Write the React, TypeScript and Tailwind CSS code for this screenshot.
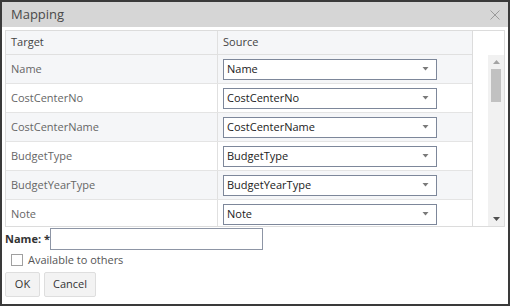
import React from "react";

const rows = [
  "Name",
  "CostCenterNo",
  "CostCenterName",
  "BudgetType",
  "BudgetYearType",
  "Note",
];

function Caret() {
  return (
    <svg width="7" height="4" viewBox="0 0 7 4" className="shrink-0">
      <path d="M0.5 0 L6.5 0 L3.5 3.5 Z" fill="#7a7a7a" />
    </svg>
  );
}

export default function App() {
  return (
    <div
      className="w-[510px] h-[306px] border-2 border-[#3a3a3a] bg-white flex flex-col text-[11px] text-[#333]"
      style={{ fontFamily: "'Open Sans', 'Noto Sans', sans-serif" }}
    >
      <div className="h-[25px] bg-[#d6d6d6] flex items-center justify-between pl-[9px] pr-[8px] shrink-0">
        <span className="text-[13px] text-[#4a4a4a]">Mapping</span>
        <svg width="10" height="10" viewBox="0 0 10 10">
          <path d="M0.5 0.5 L9.5 9.5 M9.5 0.5 L0.5 9.5" stroke="#9a9a9a" strokeWidth="1" />
        </svg>
      </div>
      <div className="px-[3px] pt-[3px] flex flex-col flex-1">
        <div className="h-[197px] border border-[#dcdcdc] flex shrink-0">
          <div className="w-[467px] flex flex-col overflow-hidden border-r border-[#dcdcdc]">
            <div className="h-[24px] shrink-0 flex bg-[#f5f6f8] border-b border-[#e0e0e0] text-[#444]">
              <div className="w-[212px] border-r border-[#e0e0e0] flex items-center pl-[5px]">Target</div>
              <div className="flex-1 flex items-center pl-[5px]">Source</div>
            </div>
            {rows.map((r, i) => (
              <div
                key={r}
                className={`h-[29px] shrink-0 flex border-b border-[#e4e4e4] ${i % 2 === 0 ? "bg-[#f5f6f8]" : "bg-white"}`}
              >
                <div className="w-[212px] border-r border-[#e0e0e0] flex items-center pl-[5px] text-[#666]">{r}</div>
                <div className="flex-1 flex items-center pl-[5px]">
                  <div className="w-[214px] h-[21px] border border-[#7d879a] bg-white flex items-center justify-between pl-[3px] pr-[7px] text-[#222]">
                    <span>{r}</span>
                    <Caret />
                  </div>
                </div>
              </div>
            ))}
          </div>
          <div className="flex-1 flex flex-col">
            <div className="h-[24px] shrink-0" />
            <div className="flex-1 flex justify-end">
              <div className="w-[16px] bg-[#f1f1f1] flex flex-col items-center">
                <div className="h-[14px] flex items-center justify-center">
                  <svg width="7" height="4" viewBox="0 0 7 4">
                    <path d="M0 4 L7 4 L3.5 0 Z" fill="#a3a3a3" />
                  </svg>
                </div>
                <div className="w-[10px] h-[33px] bg-[#c1c1c1]" />
                <div className="flex-1" />
                <div className="h-[14px] flex items-center justify-center">
                  <svg width="7" height="4" viewBox="0 0 7 4">
                    <path d="M0 0 L7 0 L3.5 4 Z" fill="#505050" />
                  </svg>
                </div>
              </div>
            </div>
          </div>
        </div>
        <div className="flex items-center mt-[1px] h-[22px]">
          <span className="font-bold text-[#333] w-[45px]">Name: *</span>
          <div className="w-[213px] h-[22px] border border-[#8d95a5] bg-white" />
        </div>
        <div className="flex items-center gap-[5px] mt-[2px] pl-[6px] h-[16px]">
          <div className="w-[12px] h-[12px] border border-[#a0a0a0] bg-white" />
          <span className="text-[#555]">Available to others</span>
        </div>
        <div className="flex gap-[4px] mt-[4px]">
          <button className="w-[35px] h-[25px] bg-[#f3f3f3] border border-[#dedede] rounded-[2px] text-[#333]">OK</button>
          <button className="w-[52px] h-[25px] bg-[#f3f3f3] border border-[#dedede] rounded-[2px] text-[#333]">Cancel</button>
        </div>
      </div>
    </div>
  );
}
